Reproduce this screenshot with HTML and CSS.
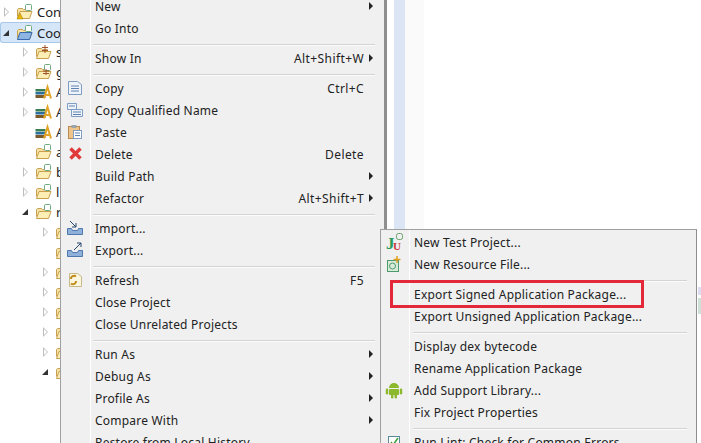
FILE: index.html
```html
<!DOCTYPE html>
<html>
<head>
<meta charset="utf-8">
<title>Eclipse context menu</title>
<link rel="stylesheet" href="styles.css">
</head>
<body>
<svg class="defs" width="0" height="0">
  <defs>
    <g id="folder"><path d="M1.500 12.500V5.500l1-1h4l1 1h5v2" fill="#f7e2a6" stroke="#c9a050"/><path d="M1.500 14.500l2.500-7h12l-2.500 7z" fill="#fdeeb6" stroke="#c9a050"/></g>
    <g id="pkgf"><use href="#folder"/><rect x="9.500" y="0.500" width="6" height="6" rx="1" fill="#fff" stroke="#6fa97f"/></g>
    <g id="lib"><rect x="0.500" y="5" width="10" height="2.500" fill="#3b7d53"/><rect x="0.500" y="8" width="10" height="2.500" fill="#2a6f9e"/><rect x="0.500" y="11" width="10" height="3" fill="#7a5a2c"/><path d="M9 14.500L12.500 3l3.500 11.500M10.500 11h4" fill="none" stroke="#e2a426" stroke-width="2"/></g>
  </defs>
</svg>
<div class="tree">
  <div class="row r0"><i class="tw"></i><svg class="ic" viewBox="0 0 18 16"><use href="#pkgf"/><path d="M1 15l3-6 3 6z" fill="#e8b800" stroke="#a07a00" stroke-width=".5"/></svg><span>Con</span></div>
  <div class="row r0 sel"><i class="tw open"></i><svg class="ic" viewBox="0 0 18 16"><use href="#pkgf"/><path d="M1.500 14.500l2.500-7h12l-2.500 7z" fill="#8fb6e2" stroke="#3a6ab0"/></svg><span>Coo</span></div>
  <div class="row r1"><i class="tw"></i><svg class="ic" viewBox="0 0 18 16"><use href="#folder"/><path d="M10 1v8M7 3.500h6M7 6.500h6" stroke="#a0562a" fill="none"/></svg><span>s</span></div>
  <div class="row r1"><i class="tw"></i><svg class="ic" viewBox="0 0 18 16"><use href="#pkgf"/><path d="M11 5v6M8 7h6M8 9.500h6" stroke="#a0562a" fill="none"/></svg><span>g</span></div>
  <div class="row r1"><i class="tw"></i><svg class="ic" viewBox="0 0 18 16"><use href="#lib"/></svg><span>A</span></div>
  <div class="row r1"><i class="tw"></i><svg class="ic" viewBox="0 0 18 16"><use href="#lib"/></svg><span>A</span></div>
  <div class="row r1"><i class="tw none"></i><svg class="ic" viewBox="0 0 18 16"><use href="#lib"/></svg><span>A</span></div>
  <div class="row r1"><i class="tw none"></i><svg class="ic" viewBox="0 0 18 16"><use href="#pkgf"/></svg><span>a</span></div>
  <div class="row r1"><i class="tw"></i><svg class="ic" viewBox="0 0 18 16"><use href="#pkgf"/></svg><span>b</span></div>
  <div class="row r1"><i class="tw"></i><svg class="ic" viewBox="0 0 18 16"><use href="#pkgf"/></svg><span>l</span></div>
  <div class="row r1"><i class="tw open"></i><svg class="ic" viewBox="0 0 18 16"><use href="#pkgf"/></svg><span>r</span></div>
  <div class="row r2"><i class="tw"></i><svg class="ic" viewBox="0 0 18 16"><use href="#folder"/></svg></div>
  <div class="row r2"><i class="tw none"></i><svg class="ic" viewBox="0 0 18 16"><use href="#folder"/></svg></div>
  <div class="row r2"><i class="tw"></i><svg class="ic" viewBox="0 0 18 16"><use href="#folder"/></svg></div>
  <div class="row r2"><i class="tw"></i><svg class="ic" viewBox="0 0 18 16"><use href="#folder"/></svg></div>
  <div class="row r2"><i class="tw"></i><svg class="ic" viewBox="0 0 18 16"><use href="#folder"/></svg></div>
  <div class="row r2"><i class="tw"></i><svg class="ic" viewBox="0 0 18 16"><use href="#folder"/></svg></div>
  <div class="row r2"><i class="tw"></i><svg class="ic" viewBox="0 0 18 16"><use href="#folder"/></svg></div>
  <div class="row r2"><i class="tw open"></i><svg class="ic" viewBox="0 0 18 16"><use href="#folder"/></svg></div>
</div>

<div class="editor"><div class="strip"></div><div class="pane"></div></div>
<div class="edge-band"></div>
<div class="edge-glyph"></div>

<div class="menu main">
  <div class="item"><span class="lbl">New</span><b class="arr"></b></div>
  <div class="item"><span class="lbl">Go Into</span></div>
  <hr>
  <div class="item"><span class="lbl">Show In</span><span class="key">Alt+Shift+W</span><b class="arr"></b></div>
  <hr>
  <div class="item"><svg class="mi" viewBox="0 0 16 16"><path d="M1.500 1.500h9l4 3v10h-13z" fill="#eef3fa" stroke="#7f9dc4"/><path d="M4 6h8M4 8.500h8M4 11h8" stroke="#5f82b0"/></svg><span class="lbl">Copy</span><span class="key">Ctrl+C</span></div>
  <div class="item"><svg class="mi" viewBox="0 0 16 16"><path d="M0.500 1.500h9v6h-9zM4.500 7.500h11v7h-11z" fill="#eef3fa" stroke="#7f9dc4"/><path d="M2 4h6M6 10h8M6 12.500h8" stroke="#5f82b0"/></svg><span class="lbl">Copy Qualified Name</span></div>
  <div class="item"><svg class="mi" viewBox="0 0 16 16"><rect x="1.500" y="2.500" width="11" height="12" fill="#eec48a" stroke="#b98a50"/><rect x="4.500" y="1" width="5" height="3" fill="#9aa4ac"/><rect x="6.500" y="6.500" width="8" height="8" fill="#fff" stroke="#7f9dc4"/><path d="M8 9h5M8 11.500h5" stroke="#5f82b0"/></svg><span class="lbl">Paste</span></div>
  <div class="item"><svg class="mi" viewBox="0 0 16 16"><path d="M3.500 2.500l10 10M13.500 2.500l-10 10" stroke="#e03a3a" stroke-width="3.500"/></svg><span class="lbl">Delete</span><span class="key">Delete</span></div>
  <div class="item"><span class="lbl">Build Path</span><b class="arr"></b></div>
  <div class="item"><span class="lbl">Refactor</span><span class="key">Alt+Shift+T</span><b class="arr"></b></div>
  <hr>
  <div class="item"><svg class="mi" viewBox="0 0 16 16"><path d="M.5 8.500v6h15v-6h-4l-1 2h-5l-1-2z" fill="#8fb0d8" stroke="#4f78ae"/><path d="M3 1l6 6M9 3v4H5" fill="none" stroke="#27466e"/></svg><span class="lbl">Import...</span></div>
  <div class="item"><svg class="mi" viewBox="0 0 16 16"><path d="M.5 8.500v6h15v-6h-4l-1 2h-5l-1-2z" fill="#8fb0d8" stroke="#4f78ae"/><path d="M7 8l7-7M10 1h4v4" fill="none" stroke="#27466e"/></svg><span class="lbl">Export...</span></div>
  <hr>
  <div class="item"><svg class="mi" viewBox="0 0 16 16"><path d="M2.500 1.500h8l4 3v10h-12z" fill="#fbf6e0" stroke="#c9b887"/><path d="M9 4.500A3 3 0 0 0 4 7M4 11.500A3 3 0 0 0 9 9" fill="none" stroke="#c08a1a" stroke-width="2"/></svg><span class="lbl">Refresh</span><span class="key">F5</span></div>
  <div class="item"><span class="lbl">Close Project</span></div>
  <div class="item"><span class="lbl">Close Unrelated Projects</span></div>
  <hr>
  <div class="item"><span class="lbl">Run As</span><b class="arr"></b></div>
  <div class="item"><span class="lbl">Debug As</span><b class="arr"></b></div>
  <div class="item"><span class="lbl">Profile As</span><b class="arr"></b></div>
  <div class="item"><span class="lbl">Compare With</span><b class="arr"></b></div>
  <div class="item"><span class="lbl">Restore from Local History...</span></div>
</div>

<div class="menu sub">
  <div class="item"><svg class="mi" viewBox="0 0 18 18"><text x="1" y="16" class="ju-j">J</text><text x="8" y="17" class="ju-u">U</text><rect x="11.500" y="0.500" width="6" height="6" rx="2" fill="#f0f0f0" stroke="#6aa06a"/></svg><span class="lbl">New Test Project...</span></div>
  <div class="item"><svg class="mi" viewBox="0 0 18 18"><rect x="2.500" y="5.500" width="11" height="11" fill="#d9ecdc" stroke="#4f9a6a"/><circle cx="7.500" cy="11" r="3" fill="none" stroke="#4f9a6a"/><path d="M12 1v7M8.500 4.500h7" stroke="#e0a020" stroke-width="1.500"/></svg><span class="lbl">New Resource File...</span></div>
  <hr>
  <div class="item"><span class="lbl">Export Signed Application Package...</span></div>
  <div class="item"><span class="lbl">Export Unsigned Application Package...</span></div>
  <hr>
  <div class="item"><span class="lbl">Display dex bytecode</span></div>
  <div class="item"><span class="lbl">Rename Application Package</span></div>
  <div class="item"><svg class="mi" viewBox="0 0 18 18"><path d="M4 7a5 5 0 0 1 10 0z" fill="#8cb82c"/><rect x="4" y="8" width="10" height="6" rx="1" fill="#8cb82c"/><rect x="0.800" y="7.500" width="2.400" height="6" rx="1.200" fill="#8cb82c"/><rect x="14.800" y="7.500" width="2.400" height="6" rx="1.200" fill="#8cb82c"/><rect x="6" y="13" width="2.400" height="4.500" rx="1.200" fill="#8cb82c"/><rect x="9.600" y="13" width="2.400" height="4.500" rx="1.200" fill="#8cb82c"/></svg><span class="lbl">Add Support Library...</span></div>
  <div class="item"><span class="lbl">Fix Project Properties</span></div>
  <hr>
  <div class="item"><svg class="mi" viewBox="0 0 18 18"><rect x="3.500" y="3.500" width="11" height="11" fill="#fff" stroke="#5a8a9a"/><path d="M6 9l2 3 5-7" fill="none" stroke="#3aa03a" stroke-width="1.500"/></svg><span class="lbl">Run Lint: Check for Common Errors</span></div>
</div>

<div class="mark"></div>
</body>
</html>
```
FILE: styles.css
```css
html, body { margin: 0; padding: 0; }
body {
  width: 701px; height: 443px; overflow: hidden; position: relative;
  background: #fff; font-family: "Noto Sans", sans-serif; font-size: 12px; color: #222;
}
.defs { position: absolute; }
.tree { padding-top: 2px; }
.row { height: 20px; display: flex; align-items: center; font-size: 13px; line-height: 20px; }
.row.r0 { padding-left: 4px; }
.row.r1 { padding-left: 23px; }
.row.r2 { padding-left: 43px; }
.row.sel { width: 60px; box-sizing: border-box; height: 21px; margin-bottom: -1px; background: #d5e6f8; border: 1px solid #a8c8ea; border-right: 0; border-radius: 3px 0 0 3px; padding-left: 3px; }
.sel .tw { margin-right: 7px; }
.tw { position: relative; width: 0; height: 0; border-left: 5px solid #bdbdbd; border-top: 5px solid transparent; border-bottom: 5px solid transparent; margin-right: 7px; flex: none; }
.tw::after { content: ""; position: absolute; left: -4px; top: -3px; border-left: 3px solid #fff; border-top: 3px solid transparent; border-bottom: 3px solid transparent; }
.tw.open { border: 0; border-right: 6px solid #333; border-top: 6px solid transparent; margin-left: -1px; }
.tw.open::after { display: none; }
.tw.none { visibility: hidden; }
.ic { width: 18px; height: 16px; margin-right: 3px; flex: none; }
.row span { white-space: nowrap; }
.editor { position: absolute; left: 385px; top: 0; width: 316px; height: 443px; display: flex; background: #fff; border-left: 2px solid #8f8f8f; box-sizing: border-box; }
.strip { width: 11px; margin-left: 7px; background: #dbe5f4; }
.pane { width: 19px; background: #fafafa; }
.edge-band { position: absolute; left: 698px; top: 287px; width: 3px; height: 8px; background: #dcdcf2; }
.edge-glyph { position: absolute; left: 698px; top: 298px; width: 3px; height: 16px; background: #cfe0d6; }
.menu { position: absolute; background: #f0f0f0; box-sizing: border-box; border: 1px solid #a0a0a0; letter-spacing: .21px; }
.main { left: 60px; top: -6px; width: 326px; height: 470px; background-image: linear-gradient(#fff, #fff); background-size: 1px 100%; background-position: 29px 0; background-repeat: no-repeat; border-right: 2px solid #8f8f8f; }
.sub { left: 380px; top: 229px; width: 317px; height: 230px; padding-top: 1px; background-image: linear-gradient(#fff, #fff); background-size: 1px 100%; background-position: 28px 0; background-repeat: no-repeat; border-right-color: #8f8f8f; }
.item { height: 22px; display: flex; align-items: center; position: relative; white-space: nowrap; }
.main .item { padding-left: 34px; padding-right: 8px; }
.sub .item { padding-left: 33px; padding-right: 8px; }
.lbl { flex: 1; }
.arr { width: 0; height: 0; border-left: 4px solid #222; border-top: 4px solid transparent; border-bottom: 4px solid transparent; position: absolute; right: 11px; top: 7px; }
.item .key { margin-right: 12px; letter-spacing: .4px; }
hr { border: 0; height: 1px; background: #d4d4d4; border-bottom: 1px solid #fbfbfb; margin: 5px 9px 1px 32px; }
.mi { position: absolute; left: 6px; top: 3px; width: 16px; height: 16px; }
.sub .mi { left: 4px; top: 2px; width: 18px; height: 18px; }
.ju-j { font: bold 17px "Liberation Serif", serif; fill: #2a9a5a; }
.ju-u { font: bold 11px "Liberation Serif", serif; fill: #c83a3a; }
.mark { position: absolute; left: 390px; top: 280px; width: 254px; height: 28px; box-sizing: border-box; border: 3px solid #e3283a; }
```
